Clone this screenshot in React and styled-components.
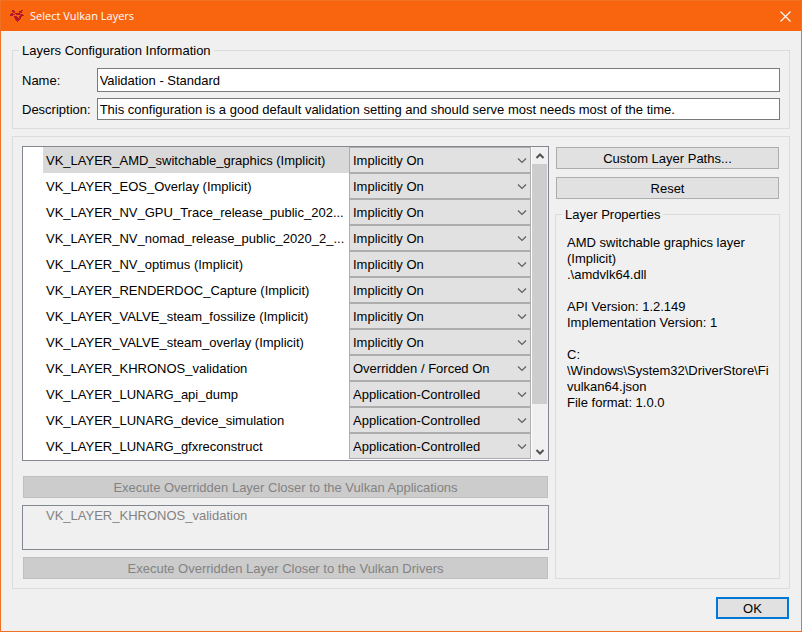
import React, { useState } from "react";
import styled, { createGlobalStyle } from "styled-components";

const GlobalStyle = createGlobalStyle`
  *, *::before, *::after { box-sizing: border-box; }
  body {
    margin: 0;
    background: #f0f0f0;
    color: #000;
    font-family: "Liberation Sans", Arial, sans-serif;
    font-size: 13px;
    line-height: 16px;
  }
  button, input, select { font: inherit; color: inherit; border-radius: 0; margin: 0; }
`;

const Window = styled.main`
  display: flex;
  flex-direction: column;
  min-height: 100vh;
  border: 1px solid #f27022;
  background: #f0f0f0;
`;

const TitleBar = styled.header`
  display: flex;
  align-items: center;
  gap: 6px;
  height: 30px;
  padding: 0 6px 0 9px;
  background: #f9650e;
  color: #fff;
`;

const Title = styled.h1`
  flex: 1;
  margin: 0;
  font: 11px/16px "Open Sans", "Noto Sans", sans-serif;
`;

const CloseButton = styled.button`
  display: flex;
  padding: 4px;
  border: 0;
  background: none;
  color: #fff;
`;

const Body = styled.div`
  display: flex;
  flex: 1;
  flex-direction: column;
  padding: 10px 11px 12px;
`;

const Group = styled.fieldset`
  min-width: 0;
  margin: 0;
  padding: 0;
  border: 1px solid #dcdcdc;
`;

const GroupTitle = styled.legend`
  margin-left: 6px;
  padding: 2px 3px 0;
`;

const InfoFields = styled.div`
  display: grid;
  grid-template-columns: auto minmax(0, 1fr);
  align-items: center;
  gap: 6px;
  padding: 9px 9px 8px;
`;

const FieldLabel = styled.label`
  padding-top: 2px;
  white-space: nowrap;
`;

const TextField = styled.input`
  width: 100%;
  height: ${(p) => (p.$tall ? 24 : 22)}px;
  padding: 0 2px;
  border: 1px solid #7a7a7a;
  background: #fff;
  outline: 0;
`;

const LayersGroup = styled(Group)`
  display: grid;
  flex: 1;
  grid-template-columns: minmax(0, 1fr) 225px;
  gap: 6px;
  margin-top: 7px;
  padding: 9px;
`;

const LayersColumn = styled.div`
  display: flex;
  flex-direction: column;
`;

const ListFrame = styled.div`
  display: flex;
  border: 1px solid #828790;
  background: #fff;
`;

const LayerTree = styled.ul`
  flex: 1;
  min-width: 0;
  margin: 0;
  padding: 0 0 1px 20px;
  list-style: none;
`;

const LayerRow = styled.li`
  display: grid;
  grid-template-columns: minmax(0, 1fr) 182px;
  align-items: center;
  height: 26px;
  background: ${(p) => (p.$selected ? "#d9d9d9" : "transparent")};
`;

const LayerName = styled.label`
  overflow: hidden;
  padding: 2px 2px 0 3px;
  text-overflow: ellipsis;
  white-space: nowrap;
`;

const SelectBox = styled.div`
  display: grid;
  align-items: center;
  height: 26px;

  > * { grid-area: 1 / 1; }
  > svg { justify-self: end; margin-right: 4px; pointer-events: none; }
`;

const StateSelect = styled.select`
  width: 100%;
  height: 26px;
  padding: 2px 20px 0 3px;
  appearance: none;
  border: 1px solid #adadad;
  background: #e1e1e1;
`;

const ScrollBar = styled.div`
  display: flex;
  flex-direction: column;
  width: 17px;
  border-left: 1px solid #fff;
  background: #f0f0f0;
`;

const ScrollArrow = styled.button`
  display: flex;
  align-items: center;
  justify-content: center;
  height: 17px;
  padding: 0;
  border: 0;
  background: none;
`;

const ScrollTrack = styled.div`
  flex: 1;
  padding-right: 1px;
`;

const ScrollThumb = styled.div`
  height: 86%;
  background: #cdcdcd;
`;

const PushButton = styled.button`
  height: 22px;
  margin: 0 1px;
  padding: 2px 8px 0;
  border: 1px solid #adadad;
  background: #e1e1e1;

  &:disabled {
    border-color: #bfbfbf;
    background: #cccccc;
    color: #838383;
  }
`;

const CloserToApps = styled(PushButton)`
  margin-top: 15px;
`;

const CloserToDrivers = styled(PushButton)`
  margin-top: 7px;
`;

const OverriddenList = styled.ul`
  height: 45px;
  margin: 7px 0 0;
  padding: 2px 0 0 23px;
  border: 1px solid #828790;
  color: #838383;
  list-style: none;
`;

const SideColumn = styled.div`
  display: flex;
  flex-direction: column;
  gap: 8px;
  min-width: 0;
  padding-top: 1px;
`;

const PropertiesGroup = styled(Group)`
  flex: 1;
  margin-top: -2px;
`;

const Properties = styled.div`
  padding: 12px 9px 0 11px;
`;

const Paragraph = styled.p`
  overflow: hidden;
  margin: 0 0 16px;
  white-space: pre-line;
`;

const Footer = styled.footer`
  display: flex;
  justify-content: flex-end;
  padding-top: 8px;
`;

const OkButton = styled(PushButton)`
  width: 73px;
  border: 2px solid #0078d7;
`;

const LAYERS = [
  ["VK_LAYER_AMD_switchable_graphics (Implicit)", "Implicitly On"],
  ["VK_LAYER_EOS_Overlay (Implicit)", "Implicitly On"],
  ["VK_LAYER_NV_GPU_Trace_release_public_202...", "Implicitly On"],
  ["VK_LAYER_NV_nomad_release_public_2020_2_...", "Implicitly On"],
  ["VK_LAYER_NV_optimus (Implicit)", "Implicitly On"],
  ["VK_LAYER_RENDERDOC_Capture (Implicit)", "Implicitly On"],
  ["VK_LAYER_VALVE_steam_fossilize (Implicit)", "Implicitly On"],
  ["VK_LAYER_VALVE_steam_overlay (Implicit)", "Implicitly On"],
  ["VK_LAYER_KHRONOS_validation", "Overridden / Forced On"],
  ["VK_LAYER_LUNARG_api_dump", "Application-Controlled"],
  ["VK_LAYER_LUNARG_device_simulation", "Application-Controlled"],
  ["VK_LAYER_LUNARG_gfxreconstruct", "Application-Controlled"],
];

function AppIcon() {
  return (
    <svg width="14" height="12" viewBox="0 0 14 12" fill="#b5172b" aria-hidden="true">
      <path d="M2 0h2v1h1v2h-2v-1h-1z M11 0h2v1h-1v2h-2v1h-1v-3h2z M1 3h2v1h2v1h-2v1h-3v-2h1z M5 3h4v1h4v1h1v1h-4v-1h-4v-1h-1z M4 6h3v1h1v1h1v-2h3v1h-1v2h-1v1h-1v1h-1v1h-1v-1h-1v-1h-1v-2h-1z" />
    </svg>
  );
}

function Chevron({ up = false, bold = false }) {
  return (
    <svg width="10" height="8" viewBox="0 0 10 8" fill="none" stroke={bold ? "#505050" : "#5f5f5f"} strokeWidth={bold ? 2 : 1.2} aria-hidden="true">
      <path d={up ? "M1.5 6L5 2.5L8.5 6" : bold ? "M1.5 2L5 5.5L8.5 2" : "M1 2.5L5 6.5L9 2.5"} />
    </svg>
  );
}

function LayerItem({ name, initial, selected, id }) {
  const [state, setState] = useState(initial);
  return (
    <LayerRow $selected={selected}>
      <LayerName htmlFor={id}>{name}</LayerName>
      <SelectBox>
        <StateSelect id={id} value={state} onChange={(e) => setState(e.target.value)}>
          {[...new Set([initial, "Application-Controlled", "Overridden / Forced On"])].map((o) => (
            <option key={o}>{o}</option>
          ))}
        </StateSelect>
        <Chevron />
      </SelectBox>
    </LayerRow>
  );
}

export default function App() {
  return (
    <>
      <GlobalStyle />
      <Window>
        <TitleBar>
          <AppIcon />
          <Title>Select Vulkan Layers</Title>
          <CloseButton aria-label="Close">
            <svg width="11" height="11" viewBox="0 0 11 11" stroke="currentColor" strokeWidth="1.1" aria-hidden="true">
              <path d="M.5 .5L10.5 10.5M10.5 .5L.5 10.5" />
            </svg>
          </CloseButton>
        </TitleBar>
        <Body>
          <Group>
            <GroupTitle>Layers Configuration Information</GroupTitle>
            <InfoFields>
              <FieldLabel htmlFor="name">Name:</FieldLabel>
              <TextField id="name" $tall defaultValue="Validation - Standard" />
              <FieldLabel htmlFor="description">Description:</FieldLabel>
              <TextField
                id="description"
                defaultValue="This configuration is a good default validation setting and should serve most needs most of the time."
              />
            </InfoFields>
          </Group>
          <LayersGroup>
            <LayersColumn>
              <ListFrame>
                <LayerTree>
                  {LAYERS.map(([name, initial], i) => (
                    <LayerItem key={name} id={`layer-${i}`} name={name} initial={initial} selected={i === 0} />
                  ))}
                </LayerTree>
                <ScrollBar>
                  <ScrollArrow aria-label="Scroll up">
                    <Chevron up bold />
                  </ScrollArrow>
                  <ScrollTrack>
                    <ScrollThumb />
                  </ScrollTrack>
                  <ScrollArrow aria-label="Scroll down">
                    <Chevron bold />
                  </ScrollArrow>
                </ScrollBar>
              </ListFrame>
              <CloserToApps disabled>Execute Overridden Layer Closer to the Vulkan Applications</CloserToApps>
              <OverriddenList>
                <li>VK_LAYER_KHRONOS_validation</li>
              </OverriddenList>
              <CloserToDrivers disabled>Execute Overridden Layer Closer to the Vulkan Drivers</CloserToDrivers>
            </LayersColumn>
            <SideColumn>
              <PushButton>Custom Layer Paths...</PushButton>
              <PushButton>Reset</PushButton>
              <PropertiesGroup>
                <GroupTitle>Layer Properties</GroupTitle>
                <Properties>
                  <Paragraph>{"AMD switchable graphics layer (Implicit)\n.\\amdvlk64.dll"}</Paragraph>
                  <Paragraph>{"API Version: 1.2.149\nImplementation Version: 1"}</Paragraph>
                  <Paragraph>{"C:\n\\Windows\\System32\\DriverStore\\Fi\nvulkan64.json\nFile format: 1.0.0"}</Paragraph>
                </Properties>
              </PropertiesGroup>
            </SideColumn>
          </LayersGroup>
          <Footer>
            <OkButton>OK</OkButton>
          </Footer>
        </Body>
      </Window>
    </>
  );
}
